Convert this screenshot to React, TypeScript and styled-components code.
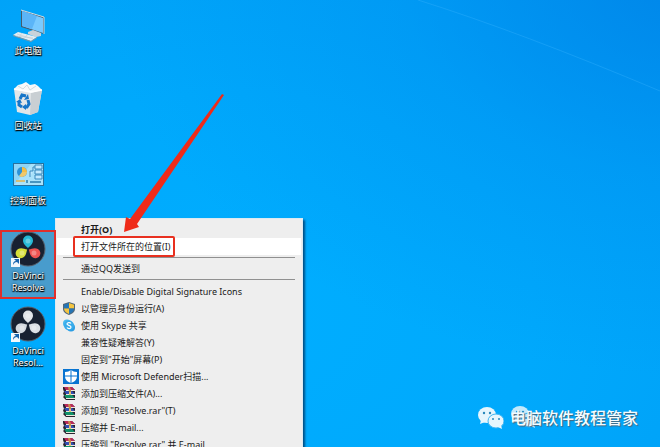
import React from "react";
import styled, { createGlobalStyle, css } from "styled-components";

const Global = createGlobalStyle`
  * { box-sizing: border-box; }
  html, body, #root { height: 100%; }
  body { margin: 0; overflow: hidden; font-family: "Noto Sans", "Noto Sans CJK SC", sans-serif; }
`;

const Desktop = styled.main`
  position: relative;
  height: 100vh;
  overflow: hidden;
  background:
    radial-gradient(ellipse at 105% -5%, rgba(0, 124, 228, 0.7) 0%, rgba(0, 132, 234, 0.3) 30%, rgba(0, 144, 242, 0) 60%),
    radial-gradient(ellipse at 35% 70%, #00aeff 0%, #00a9fc 50%, #009ff6 100%);
`;

const LightBeam = styled.svg`
  position: absolute;
  top: 0;
  right: 0;
  width: 250px;
  height: 95px;
`;

const IconColumn = styled.nav`
  display: flex;
  flex-direction: column;
  width: 56px;
  padding-top: 5px;
`;

const Shortcut = styled.button<{ $selected?: boolean }>`
  display: flex;
  flex-direction: column;
  align-items: center;
  height: 75px;
  padding: 0;
  border: 0;
  background: none;
  font: inherit;
  ${(p) =>
    p.$selected &&
    css`
      position: relative;
      z-index: 1;
      height: 69px;
      margin: 0 0 6px;
      background: #489ccd;
      outline: 2px solid #e02f2c;
      outline-offset: -2px;
    `}
`;

const Picture = styled.svg`
  flex: none;
  width: 40px;
  height: 40px;
`;

const Caption = styled.span`
  font-size: 9px;
  line-height: 12px;
  color: #fff;
  text-align: center;
  text-shadow: 0 1px 1px #000, 1px 1px 1px #000, 0 0 2px rgba(0, 0, 0, 0.8);
`;

const Menu = styled.div`
  position: absolute;
  left: 55px;
  top: 218px;
  width: 248px;
  padding: 2px 1px;
  background: #eee;
  border: 1px solid #dceaf2;
  border-bottom: 0;
  box-shadow: 2px 2px 2px rgba(0, 30, 70, 0.65);
`;

const Item = styled.button<{ $strong?: boolean; $active?: boolean }>`
  display: grid;
  grid-template-columns: 24px 1fr;
  align-items: center;
  width: 100%;
  height: 17px;
  padding: 0;
  border: 0;
  background: ${(p) => (p.$active ? "#fff" : "none")};
  color: #1a1a1a;
  font: inherit;
  font-size: 9px;
  font-weight: ${(p) => (p.$strong ? 700 : 400)};
  line-height: 17px;
  text-align: left;
  white-space: pre;
`;

const Glyph = styled.svg<{ $large?: boolean }>`
  width: ${(p) => (p.$large ? 16 : 12)}px;
  height: ${(p) => (p.$large ? 15 : 13)}px;
  margin-left: 6px;
`;

const Separator = styled.hr<{ $loose?: boolean }>`
  height: 1px;
  margin: 2px 6px ${(p) => (p.$loose ? 3 : 2)}px;
  border: 0;
  background: #909090;
`;

const Frame = styled.div`
  position: absolute;
  left: 73px;
  top: 236px;
  width: 102px;
  height: 21px;
  border: 2px solid #e8301f;
  border-radius: 2px;
`;

const Arrow = styled.svg`
  position: absolute;
  left: 120px;
  top: 90px;
  width: 110px;
  height: 145px;
`;

const Watermark = styled.footer`
  position: absolute;
  right: 22px;
  bottom: 16px;
  display: flex;
  align-items: center;
  gap: 6px;
  font-size: 16px;
  font-weight: 500;
  line-height: 26px;
  color: #f4fcff;
  text-shadow: 1px 1px 1px #4a6478;
`;

const Chat = styled.svg`
  width: 27px;
  height: 24px;
`;

const Account = styled.span`
  position: relative;
`;

const AccountName = styled.span`
  position: relative;
`;

const ChatBehind = styled(Chat)`
  position: absolute;
  left: 0;
  top: 0;
  opacity: 0.85;
`;

const Computer = () => (
  <Picture viewBox="0 0 40 40">
    <path d="M13 5l23 7v17l-23-7z" fill="#455d6e" />
    <path d="M14 6l21 7v15l-21-7z" fill="#79caff" />
    <path d="M14 6l15 5-5 13-10-3z" fill="#5bb5f8" />
    <path d="M13 5l23 7v17" fill="none" stroke="#cbdde7" />
    <path d="M20 27l5-2 8 3v3l-5 1-8-3z" fill="#c8d3da" />
    <path d="M5 30l5-3 19 5-6 4z" fill="#e4edf2" />
    <path d="M5 30l18 6 6-4v1l-6 4-18-6z" fill="#8097a5" />
    <path d="M9 29l16 5M8 31l17 2M14 28l-3 4m8-2-3 4" stroke="#bdcad2" strokeWidth=".6" />
  </Picture>
);

const Recycle = () => (
  <Picture viewBox="0 0 40 40">
    <path d="M6 9l28 1-4 22-8 3-13-3z" fill="#e3e6e8" />
    <path d="M23 12l11-2-4 22-8 3z" fill="#c9cfd3" />
    <path d="M6 9l4-4 4-1 4-2 4 3 5-1 3 2 4 4-11 3z" fill="#f7f9fa" />
    <path d="M10 6l5 3 4-4 3 5 6-4" fill="none" stroke="#d3dade" />
    <path d="M6 9l17 3 11-2" fill="none" stroke="#fff" strokeWidth="1.5" />
    <g fill="none" stroke="#1776c9" strokeWidth="3">
      <path d="M12 19l2-4 4 1" />
      <path d="M20 20l1 4-2 3h-2" />
      <path d="M14 27l-3-2v-4" />
    </g>
    <path d="M16 20l5-1-1-5zM18 24v6l-4-3zM8 22l4-3 2 4z" fill="#1776c9" />
  </Picture>
);

const Panel = () => (
  <Picture viewBox="0 0 40 40">
    <rect x="5" y="8" width="31" height="23" fill="#28719e" />
    <rect x="6" y="9" width="29" height="21" fill="#8ed5f8" />
    <path d="M6 30L23 9h12v21z" fill="#a9e2fa" />
    <circle cx="14" cy="17" r="5" fill="#2b92d8" />
    <path d="M14 17v-5a5 5 0 0 1 5 5z" fill="#f4bd45" />
    <path d="M14 17h5a5 5 0 0 1-5 5 5 5 0 0 1-3-1z" fill="#efc96a" />
    <path d="M22 22v-6h3V12h2M27 10h7v4h-7zm0 5h7v4h-7zm0 5h7v4h-7z" fill="#c3eaff" stroke="#3989bd" strokeWidth="1" />
    <path d="M8 26h9" stroke="#e5b34d" strokeWidth="1.500" />
    <path d="M19 25v3m3-1h11" stroke="#287cad" strokeWidth="1.500" />
  </Picture>
);

const petal = "M20 18c-2-2-5-4-5-7.500a5 5 0 0 1 10 0c0 3.500-3 5.500-5 7.500z";

const Resolve = ({ mono = false }: { mono?: boolean }) => {
  const [top, left, right] = mono ? ["#e2e5e9", "#d4d9df", "#dce0e5"] : ["#26b9d5", "#d7df37", "#ee5351"];
  return (
    <Picture viewBox="0 0 40 40">
      <circle cx="20" cy="19" r="17" fill="#182131" stroke="#58616d" strokeWidth="1" />
      <path d={petal} fill={top} />
      <path d={petal} transform="rotate(240 20 19)" fill={left} />
      <path d={petal} transform="rotate(120 20 19)" fill={right} />
      <circle cx="20" cy="11" r="2.500" fill="#fff" opacity=".3" />
      <circle cx="14" cy="23" r="2.500" fill="#fff" opacity=".3" />
      <circle cx="26" cy="23" r="2.500" fill="#fff" opacity=".3" />
      <path d="M3 28h9v9H3z" fill="#f3f8fb" />
      <path d="M5 35c0-3 1-4 3-4l-2-2h5v5l-2-2c-2 0-3 1-4 3z" fill="#1764ad" />
    </Picture>
  );
};

const Shield = () => (
  <Glyph viewBox="0 0 12 13">
    <path d="M6 0l6 2v5c0 3-3 5-6 6-3-1-6-3-6-6V2z" fill="#536879" />
    <path d="M6 1v5.500H1V2.700z" fill="#2475b6" />
    <path d="M6 1l5 1.700v3.800H6z" fill="#f5c541" />
    <path d="M1 6.500h5V12C3 11 1 9 1 6.500z" fill="#f5c541" />
    <path d="M6 6.500h5C11 9 9 11 6 12z" fill="#2475b6" />
  </Glyph>
);

const Skype = () => (
  <Glyph viewBox="0 0 12 13">
    <circle cx="4" cy="4.500" r="4" fill="#45b8f0" />
    <circle cx="8" cy="8.500" r="4" fill="#2b9de3" />
    <circle cx="6" cy="6.500" r="5" fill="#38abea" />
    <path d="M8 4.500C7 3 4 3.400 4 5s4 1 4 3-3 2-4 .5" fill="none" stroke="#fff" strokeWidth="1.200" />
  </Glyph>
);

const Defender = () => (
  <Glyph $large viewBox="0 0 16 15">
    <path d="M0 0h16v15H0z" fill="#0874d1" />
    <path d="M8 1c2 1 3 2 6 2v4c0 4-3 6-6 7-3-1-6-3-6-7V3c3 0 4-1 6-2z" fill="#fff" />
    <path d="M8 1v13M2 7h12" stroke="#0874d1" />
  </Glyph>
);

const Rar = () => (
  <Glyph viewBox="0 0 12 13">
    <path d="M0 0h9l3 3v10H3l-3-3 1-1-1-3 1-1-1-3z" fill="#2b2430" />
    <path d="M1 0h8l3 3H3z" fill="#b8295b" />
    <path d="M3 3h9v1H3zM3 7h9v1H3zM3 11h9v1H3z" fill="#eee8dc" />
    <path d="M1 4h8l3 3H3z" fill="#3450b4" />
    <path d="M1 8h8l3 3H3z" fill="#11926a" />
    <path d="M5 0h2l1 3v2H6z" fill="#c98b4a" />
    <path d="M6 5h2v3H6z" fill="#dfc27b" />
  </Glyph>
);

const ChatShapes = () => (
  <>
    <ellipse cx="10" cy="9" rx="9" ry="8" fill="#e6f6fd" />
    <path d="M4 14l-1 4 5-2z" fill="#e6f6fd" />
    <ellipse cx="19" cy="15" rx="8" ry="7" fill="#e6f6fd" stroke="#43b6f0" strokeWidth="1" />
    <path d="M21 21l4 2-1-4z" fill="#e6f6fd" />
    <g fill="#2889bb">
      <circle cx="7" cy="7" r="1.200" />
      <circle cx="13" cy="7" r="1.200" />
      <circle cx="16" cy="13" r="1" />
      <circle cx="22" cy="13" r="1" />
    </g>
  </>
);

const tools = [
  { label: "Enable/Disable Digital Signature Icons" },
  { label: "以管理员身份运行(A)", icon: <Shield /> },
  { label: "使用 Skype 共享", icon: <Skype /> },
  { label: "兼容性疑难解答(Y)" },
  { label: "固定到\"开始\"屏幕(P)" },
  { label: "使用 Microsoft Defender扫描...", icon: <Defender /> },
  { label: "添加到压缩文件(A)...", icon: <Rar /> },
  { label: "添加到 \"Resolve.rar\"(T)", icon: <Rar /> },
  { label: "压缩并 E-mail...", icon: <Rar /> },
  { label: "压缩到 \"Resolve.rar\" 并 E-mail", icon: <Rar /> },
];

export default function App() {
  return (
    <>
      <Global />
      <Desktop>
        <LightBeam viewBox="0 0 250 95" aria-hidden="true">
          <path d="M8 0Q110 32 250 91" fill="none" stroke="#38b5ff" strokeWidth="1" opacity=".35" />
        </LightBeam>
        <IconColumn>
          <Shortcut><Computer /><Caption>此电脑</Caption></Shortcut>
          <Shortcut><Recycle /><Caption>回收站</Caption></Shortcut>
          <Shortcut><Panel /><Caption>控制面板</Caption></Shortcut>
          <Shortcut $selected><Resolve /><Caption>DaVinci<br />Resolve</Caption></Shortcut>
          <Shortcut><Resolve mono /><Caption>DaVinci<br />Resol...</Caption></Shortcut>
        </IconColumn>
        <Menu role="menu">
          <Item role="menuitem" $strong><i /><span>打开(O)</span></Item>
          <Item role="menuitem" $active><i /><span>打开文件所在的位置(I)</span></Item>
          <Separator />
          <Item role="menuitem"><i /><span>通过QQ发送到</span></Item>
          <Separator $loose />
          {tools.map((t) => (
            <Item role="menuitem" key={t.label}>{t.icon ?? <i />}<span>{t.label}</span></Item>
          ))}
        </Menu>
        <Frame />
        <Arrow viewBox="0 0 110 145" aria-hidden="true">
          <path d="M102 4l2 1L17 134l2 3-15 5 2-15 4 2z" fill="#ef2b19" />
        </Arrow>
        <Watermark>
          <Chat viewBox="0 0 27 24"><ChatShapes /></Chat>
          <Account>
            <ChatBehind viewBox="0 0 27 24"><ChatShapes /></ChatBehind>
            <AccountName>电脑软件教程管家</AccountName>
          </Account>
        </Watermark>
      </Desktop>
    </>
  );
}
